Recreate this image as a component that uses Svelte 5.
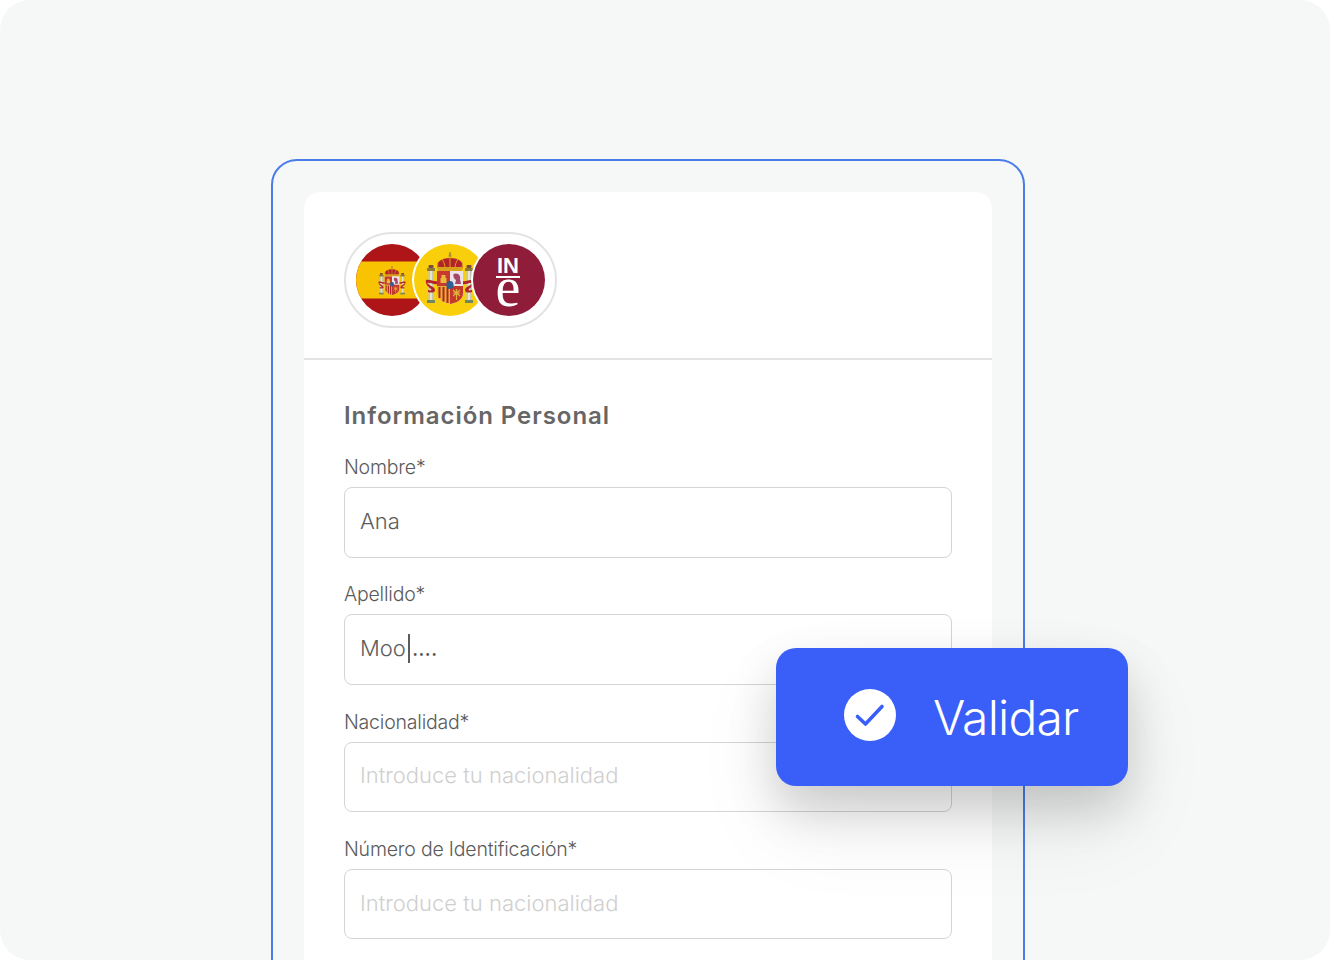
<script lang="ts">
  type Field = { label: string; value?: string; tail?: string; placeholder?: string };

  const fields: Field[] = [
    { label: "Nombre*", value: "Ana" },
    { label: "Apellido*", value: "Moo", tail: "...." },
    { label: "Nacionalidad*", placeholder: "Introduce tu nacionalidad" },
    { label: "Número de Identificación*", placeholder: "Introduce tu nacionalidad" },
  ];
</script>

<main class="screen">
  <section class="frame">
    <div class="card">
      <header class="card__header">
        <div class="logos">
          <svg width="191" height="74" viewBox="0 0 191 74" aria-hidden="true">
            <defs>
              <clipPath id="flag-clip"><circle cx="36" cy="37" r="36" /></clipPath>
              <g id="arms">
                <!-- pillars -->
                <rect x="-21.5" y="-10" width="5" height="31" fill="#c4c6b4" />
                <rect x="16.5" y="-10" width="5" height="31" fill="#c4c6b4" />
                <rect x="-20" y="-10" width="2" height="31" fill="#e4e3d4" />
                <rect x="18" y="-10" width="2" height="31" fill="#e4e3d4" />
                <rect x="-23" y="-12" width="8" height="3" fill="#8b7a3c" />
                <rect x="15" y="-12" width="8" height="3" fill="#8b7a3c" />
                <rect x="-21.5" y="-15" width="5" height="3" rx="1" fill="#7b4a3a" />
                <rect x="16.5" y="-15" width="5" height="3" rx="1" fill="#7b4a3a" />
                <rect x="-23" y="20" width="8" height="3" fill="#6f8563" />
                <rect x="15" y="20" width="8" height="3" fill="#6f8563" />
                <!-- ribbons -->
                <path d="M-24 0 C-20 -1 -16 2 -12 1 V4 C-16 5 -20 2 -23 3 C-20 6 -15 7 -15 10 C-15 13 -19 13 -22 12 L-22 10 C-19 11 -18 10 -19 9 C-21 7 -25 5 -24 0Z" fill="#b3242a" />
                <path d="M24 0 C20 -1 16 2 12 1 V4 C16 5 20 2 23 3 C20 6 15 7 15 10 C15 13 19 13 22 12 L22 10 C19 11 18 10 19 9 C21 7 25 5 24 0Z" fill="#b3242a" />
                <!-- crown -->
                <path d="M-12 -11 C-15 -18 -9 -22 0 -22 C9 -22 15 -18 12 -11Z" fill="#b3242a" />
                <path d="M-12.5 -13 H12.5 L12 -9 H-12Z" fill="#d9a21b" />
                <path d="M-8 -21 C-6 -18 -5 -15 -5 -12 M8 -21 C6 -18 5 -15 5 -12 M0 -23 V-12" stroke="#d9a21b" stroke-width="1" fill="none" />
                <path d="M-12 -18 C-13 -15 -12 -14 -11.5 -12 M12 -18 C13 -15 12 -14 11.5 -12" stroke="#d9a21b" stroke-width="1" fill="none" />
                <circle cx="0" cy="-24" r="1.8" fill="#c9a02a" />
                <rect x="-0.5" y="-28" width="1" height="3.5" fill="#6d6a3a" />
                <!-- shield -->
                <path d="M-13 -9 H13 V13 C13 20 6 23 0 24 C-6 23 -13 20 -13 13Z" fill="#f1e4cf" />
                <path d="M-13 -9 H0 V6 H-13Z" fill="#c8392f" />
                <path d="M0 -9 H13 V6 H0Z" fill="#ece3e6" />
                <path d="M-13 6 H0 V24 C-6 23 -13 20 -13 13Z" fill="#e5b32b" />
                <path d="M-10.5 7 V18 M-6.5 7 V21.5 M-2.5 7 V23" stroke="#b3242a" stroke-width="2" />
                <path d="M0 6 H13 V13 C13 20 6 23 0 24Z" fill="#c5382c" />
                <path d="M3 10 L10 16 M10 10 L3 16 M3 13 H10 M6.5 9 V20" stroke="#e3b23a" stroke-width="1.2" />
                <path d="M-9.5 3 V-2 H-8.5 V-5 H-4.5 V-2 H-3.5 V3Z" fill="#e8bb3c" />
                <path d="M3.5 -6 C8 -8 11 -4 10 -1 L11 4 H5 L6 0 C4 -1 3 -3 3.5 -6Z" fill="#a5466d" />
                <ellipse cx="0" cy="5" rx="3.6" ry="4" fill="#2f5f93" />
              </g>
            </defs>

            <!-- Spanish flag -->
            <g clip-path="url(#flag-clip)">
              <rect x="0" y="0" width="74" height="74" fill="#ad1519" />
              <rect x="0" y="18.5" width="74" height="37" fill="#f8c300" />
            </g>
            <use href="#arms" transform="translate(36 38.5) scale(.56)" />

            <!-- coat of arms -->
            <circle cx="94" cy="37" r="38" fill="#fff" />
            <circle cx="94" cy="37" r="36" fill="#f8cf0a" />
            <use href="#arms" transform="translate(94 37)" />

            <!-- INE -->
            <circle cx="153" cy="37" r="38" fill="#fff" />
            <circle cx="153" cy="37" r="36" fill="#8f1d39" />
            <text class="ine-in" x="152" y="30" text-anchor="middle">IN</text>
            <rect x="140" y="33" width="24" height="2" fill="#fff" />
            <text class="ine-e" x="152" y="63" text-anchor="middle">e</text>
          </svg>
        </div>
      </header>

      <div class="card__body">
        <h2>Información Personal</h2>
        {#each fields as field}
          <div class="field">
            <span class="field__label">{field.label}</span>
            <div class="field__input">
              {#if field.placeholder}
                <span class="placeholder">{field.placeholder}</span>
              {:else}
                <span>{field.value}</span>{#if field.tail}<i class="caret"></i><span class="tail">{field.tail}</span>{/if}
              {/if}
            </div>
          </div>
        {/each}
      </div>
    </div>
  </section>

  <div class="validate">
    <svg width="52" height="52" viewBox="0 0 52 52" aria-hidden="true">
      <circle cx="26" cy="26" r="26" fill="#fff" />
      <path d="M13.5 27.5 L21.5 35 L38 17.5" fill="none" stroke="#3a5ef8" stroke-width="3.6" stroke-linecap="round" stroke-linejoin="round" />
    </svg>
    <span>Validar</span>
  </div>
</main>

<style>
  :global(body) {
    background: #fff;
  }

  .screen {
    position: relative;
    box-sizing: border-box;
    width: 1330px;
    height: 960px;
    padding: 159px 0 0 271px;
    overflow: hidden;
    background: #f6f7f7;
    border-radius: 30px;
    font-family: Inter, "Liberation Sans", sans-serif;
    color: #636363;
  }

  .frame {
    box-sizing: border-box;
    width: 754px;
    height: 900px;
    padding: 31px;
    border: 2px solid #4a7de9;
    border-radius: 26px;
  }

  .card {
    height: 860px;
    background: #fff;
    border-radius: 16px;
  }

  .card__header {
    box-sizing: border-box;
    height: 168px;
    padding: 40px 40px 0;
    border-bottom: 2px solid #e3e3e3;
  }

  .logos {
    box-sizing: border-box;
    display: flex;
    align-items: center;
    width: 213px;
    height: 96px;
    padding-left: 10px;
    border: 2px solid #e3e3e3;
    border-radius: 48px;
  }

  .logos svg {
    display: block;
    overflow: visible;
  }

  .ine-in {
    font: 700 22px "Liberation Sans", sans-serif;
    fill: #fff;
  }

  .ine-e {
    font: 400 56px "Liberation Serif", serif;
    fill: #fff;
  }

  .card__body {
    padding: 40px 40px 0;
  }

  h2 {
    margin: 0 0 23px;
    font-size: 24px;
    line-height: 32px;
    font-weight: 600;
    letter-spacing: 0.95px;
    color: #666;
  }

  .field {
    margin-bottom: 24.83px;
  }

  .field__label {
    display: block;
    height: 24px;
    margin-bottom: 8px;
    font-size: 19.5px;
    line-height: 24px;
    font-weight: 300;
    letter-spacing: -0.2px;
    color: #5a5a5a;
  }

  .field__input {
    box-sizing: border-box;
    display: flex;
    align-items: center;
    height: 70.5px;
    padding: 0 15px 3px;
    background: #fff;
    border: 1px solid #d4d4d4;
    border-radius: 8px;
    font-size: 22px;
    font-weight: 300;
    color: #5c5c5c;
  }

  .placeholder {
    color: #cfcfcf;
  }

  .caret {
    width: 2px;
    height: 29px;
    margin: 0 2px;
    background: #5c5c5c;
  }

  .tail {
    font-weight: 400;
  }

  .validate {
    position: absolute;
    left: 776px;
    top: 648px;
    box-sizing: border-box;
    display: flex;
    align-items: center;
    gap: 37px;
    width: 352px;
    height: 138px;
    padding-left: 68px;
    background: #3a5ef8;
    border-radius: 20px;
    box-shadow: 0 24px 48px rgba(0, 0, 0, 0.16), 0 40px 90px rgba(0, 0, 0, 0.07);
    color: #fff;
    font-size: 48px;
    font-weight: 300;
    letter-spacing: -0.8px;
  }

  .validate svg {
    margin-bottom: 4px;
  }
</style>
